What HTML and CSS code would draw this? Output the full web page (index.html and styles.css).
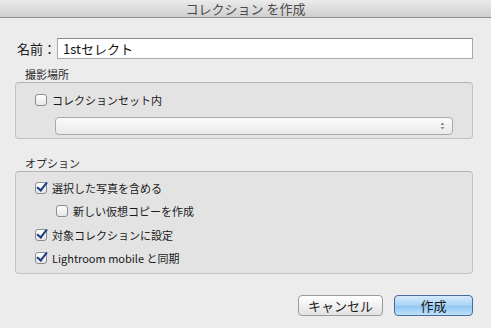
FILE: index.html
```html
<!DOCTYPE html>
<html lang="ja">
<head>
    <meta charset="UTF-8">
    <title>コレクション を作成</title>
    <link rel="stylesheet" href="styles.css">
</head>
<body>
    <div class="titlebar">コレクション を作成</div>

    <div class="dialog">
        <div class="name-row">
            <label for="name">名前：</label>
            <input type="text" id="name" value="1stセレクト">
        </div>

        <!-- 撮影場所 -->
        <div class="section-title first">撮影場所</div>
        <div class="group group-place">
            <div class="check-row">
                <span class="box"></span>
                <span>コレクションセット内</span>
            </div>
            <div class="select">
                <svg width="5" height="8" viewBox="0 0 5 8">
                    <path d="M2.5 0.5 L4.5 3 L0.5 3 Z M2.5 7.5 L4.5 5 L0.5 5 Z" fill="#8a8a8a"/>
                </svg>
            </div>
        </div>

        <!-- オプション -->
        <div class="section-title">オプション</div>
        <div class="group group-options">
            <div class="check-row">
                <span class="box checked"></span>
                <span>選択した写真を含める</span>
            </div>
            <div class="check-row sub">
                <span class="box"></span>
                <span>新しい仮想コピーを作成</span>
            </div>
            <div class="check-row">
                <span class="box checked"></span>
                <span>対象コレクションに設定</span>
            </div>
            <div class="check-row">
                <span class="box checked"></span>
                <span>Lightroom mobile と同期</span>
            </div>
        </div>

        <div class="buttons">
            <button class="btn">キャンセル</button>
            <button class="btn primary">作成</button>
        </div>
    </div>
</body>
</html>
```

FILE: styles.css
```css
body {
    margin: 0;
    width: 491px;
    height: 328px;
    overflow: hidden;
    background: #ececec;
    font-family: 'Lucida Grande', 'Noto Sans CJK JP', 'DejaVu Sans', sans-serif;
    font-size: 11px;
    color: #1a1a1a;
}

.titlebar {
    height: 18px;
    line-height: 17px;
    text-align: center;
    font-size: 13px;
    color: #4a4a4a;
    background: linear-gradient(#ebebeb, #cfcfcf);
    border-bottom: 1px solid #8e8e8e;
    box-sizing: border-box;
}

.dialog {
    padding: 0 18px 0 15px;
}

.name-row {
    display: flex;
    align-items: center;
    margin-top: 20px;
}

.name-row label {
    width: 40px;
    padding-left: 2px;
    font-size: 13px;
}

.name-row input {
    flex: 1;
    height: 21px;
    box-sizing: border-box;
    border: 1px solid #a8a8a8;
    border-top-color: #8c8c8c;
    background: #fff;
    padding: 0 5px;
    font-family: inherit;
    font-size: 13px;
    color: #111;
    outline: none;
}

.section-title {
    margin-left: 10px;
    height: 16px;
    line-height: 16px;
    color: #2a2a2a;
}

.section-title.first {
    margin-top: 7px;
}

.group {
    background: #e3e3e3;
    border: 1px solid #c2c2c2;
    border-top-color: #b3b3b3;
    border-radius: 4px;
    box-sizing: border-box;
}

.group-place {
    height: 57px;
    padding: 10px 0 0 19px;
    margin-bottom: 16px;
}

.group-options {
    height: 103px;
    padding: 9px 0 0 19px;
}

.check-row {
    display: flex;
    align-items: center;
    height: 13px;
    margin-bottom: 10.5px;
}

.check-row.sub {
    margin-left: 21px;
}

.box {
    width: 12px;
    height: 12px;
    margin-right: 5px;
    border: 1px solid #8d8d8d;
    border-radius: 3px;
    background: linear-gradient(#ffffff, #e6e6e6);
    box-sizing: border-box;
    position: relative;
    flex: none;
}

.box.checked::after {
    content: "";
    position: absolute;
    left: 3px;
    top: -3px;
    width: 4px;
    height: 9px;
    border-right: 2.5px solid #1b3f86;
    border-bottom: 2.5px solid #1b3f86;
    transform: rotate(38deg);
}

.select {
    margin: 4px 19px 0 20px;
    height: 18px;
    box-sizing: border-box;
    border: 1px solid #a9a9a9;
    border-radius: 4px;
    background: linear-gradient(#fbfbfb, #e9e9e9);
    display: flex;
    align-items: center;
    justify-content: flex-end;
    padding-right: 7px;
}

.buttons {
    display: flex;
    justify-content: flex-end;
    gap: 11px;
    margin-top: 21px;
}

.btn {
    height: 21px;
    box-sizing: border-box;
    border: 1px solid #9a9a9a;
    border-radius: 4px;
    background: linear-gradient(#ffffff, #e2e2e2);
    font-family: inherit;
    font-size: 13px;
    color: #1a1a1a;
    padding: 0;
    width: 85px;
}

.btn.primary {
    width: 79px;
    border-color: #4a6aa0;
    background: linear-gradient(#d6ebfc, #a8d2f5 50%, #8cc3f2 51%, #bfe1fb);
}
```
